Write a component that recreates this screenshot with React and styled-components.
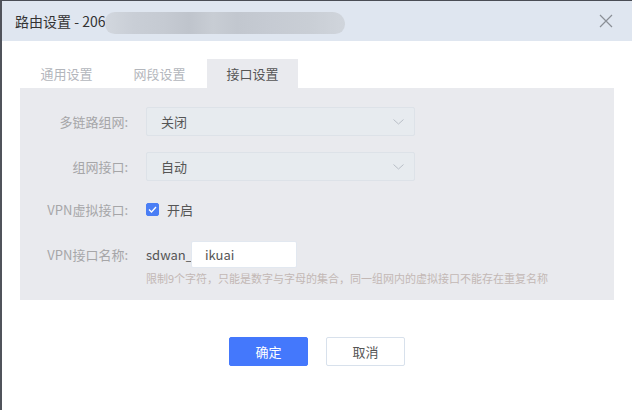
import { useState } from "react"
import styled, { createGlobalStyle } from "styled-components"

const GlobalStyle = createGlobalStyle`
  html, body {
    margin: 0;
    padding: 0;
    background: #ffffff;
  }
  body {
    font-family: "Noto Sans CJK SC", "Noto Sans", sans-serif;
    font-size: 13px;
    color: #555;
  }
`

const tabs = ["通用设置", "网段设置", "接口设置"]

const ChevronDown = () => (
  <svg width="11" height="6" viewBox="0 0 11 6">
    <path d="M0.5 0.5 L5.5 5 L10.5 0.5" fill="none" stroke="#b9bec6" strokeWidth="1" />
  </svg>
)

const CloseIcon = () => (
  <svg width="14" height="14" viewBox="0 0 14 14">
    <path d="M1 1 L13 13 M13 1 L1 13" stroke="#8a8f96" strokeWidth="1.2" />
  </svg>
)

const CheckMark = () => (
  <svg width="9" height="7" viewBox="0 0 9 7">
    <path d="M1 3.5 L3.5 6 L8 1" fill="none" stroke="#fff" strokeWidth="1.3" />
  </svg>
)

export default function App() {
  const [active, setActive] = useState(2)
  const [checked, setChecked] = useState(true)
  const [name, setName] = useState("ikuai")

  return (
    <>
      <GlobalStyle />
      <Modal>
        <Header>
          <Title>
            路由设置 - 206
            <Redacted />
          </Title>
          <CloseButton>
            <CloseIcon />
          </CloseButton>
        </Header>
        <Body>
          <TabBar>
            {tabs.map((t, i) => (
              <Tab key={t} $active={i === active} onClick={() => setActive(i)}>
                {t}
              </Tab>
            ))}
          </TabBar>
          <Panel>
            <Row>
              <Label>多链路组网:</Label>
              <Select>
                关闭
                <ChevronDown />
              </Select>
            </Row>
            <Row>
              <Label>组网接口:</Label>
              <Select>
                自动
                <ChevronDown />
              </Select>
            </Row>
            <Row $height={24}>
              <Label>VPN虚拟接口:</Label>
              <CheckLabel onClick={() => setChecked(!checked)}>
                <CheckBox $checked={checked}>{checked && <CheckMark />}</CheckBox>
                开启
              </CheckLabel>
            </Row>
            <Row $height={27} $top={20}>
              <Label>VPN接口名称:</Label>
              <NameField>
                <Prefix>sdwan_</Prefix>
                <NameInput value={name} onChange={(e) => setName(e.target.value)} />
              </NameField>
            </Row>
            <Hint>限制9个字符，只能是数字与字母的集合，同一组网内的虚拟接口不能存在重复名称</Hint>
          </Panel>
          <Footer>
            <Button $primary>确定</Button>
            <Button>取消</Button>
          </Footer>
        </Body>
      </Modal>
    </>
  )
}

const Modal = styled.div`
  box-sizing: border-box;
  height: 410px;
  border-top: 1px solid #4a4d55;
  border-left: 2px solid #50535b;
  background: #fff;
  display: flex;
  flex-direction: column;
`

const Header = styled.div`
  height: 40px;
  background: #dfe6f0;
  display: flex;
  align-items: center;
  justify-content: space-between;
  padding-left: 13px;
  padding-right: 19px;
`

const Title = styled.div`
  display: flex;
  align-items: center;
  font-size: 14px;
  color: #333;
  line-height: 20px;
`

const Redacted = styled.span`
  display: inline-block;
  width: 240px;
  height: 22px;
  margin-top: 4px;
  border-radius: 11px 14px 11px 11px;
  background: linear-gradient(
    90deg,
    #d2d7de 0%,
    #c9ced6 12%,
    #c5cad2 25%,
    #bfc4cc 35%,
    #c8cdd4 45%,
    #c2c7cf 55%,
    #c6cbd3 70%,
    #c9ced5 85%,
    #d0d5dc 100%
  );
  filter: blur(0.6px);
`

const CloseButton = styled.div`
  display: flex;
  align-items: center;
  cursor: pointer;
`

const Body = styled.div`
  padding: 18px 18px 0 18px;
  display: flex;
  flex-direction: column;
`

const TabBar = styled.div`
  display: flex;
  gap: 2px;
  padding-left: 1px;
`

const Tab = styled.div`
  width: 91px;
  height: 29px;
  display: flex;
  align-items: center;
  justify-content: center;
  font-size: 13px;
  color: ${(p) => (p.$active ? "#555" : "#b3b6bc")};
  background: ${(p) => (p.$active ? "#e9eaee" : "transparent")};
  cursor: pointer;
`

const Panel = styled.div`
  background: #e9eaee;
  padding: 19px 0 15px 0;
  display: flex;
  flex-direction: column;
`

const Row = styled.div`
  display: flex;
  align-items: center;
  height: ${(p) => p.$height || 29}px;
  margin-top: ${(p) => (p.$top === undefined ? 16 : p.$top)}px;
  &:first-child {
    margin-top: 0;
  }
`

const Label = styled.div`
  width: 108px;
  margin-right: 18px;
  text-align: right;
  color: #a6a6a8;
  font-size: 13px;
`

const Select = styled.div`
  box-sizing: border-box;
  width: 269px;
  height: 29px;
  border: 1px solid #dde2e8;
  border-radius: 2px;
  background: #e7ebef;
  display: flex;
  align-items: center;
  justify-content: space-between;
  padding: 0 10px 0 14px;
  color: #555;
  font-size: 13px;
`

const CheckLabel = styled.label`
  display: flex;
  align-items: center;
  gap: 8px;
  color: #555;
  cursor: pointer;
`

const CheckBox = styled.span`
  box-sizing: border-box;
  width: 13px;
  height: 13px;
  border-radius: 2px;
  display: flex;
  align-items: center;
  justify-content: center;
  background: ${(p) => (p.$checked ? "#4a7ef5" : "#fff")};
  border: 1px solid ${(p) => (p.$checked ? "#4a7ef5" : "#ccd")};
`

const NameField = styled.div`
  display: flex;
  align-items: center;
`

const Prefix = styled.span`
  color: #555;
  font-size: 13px;
  width: 45px;
`

const NameInput = styled.input`
  box-sizing: border-box;
  width: 106px;
  height: 27px;
  border: 1px solid #e2e8f0;
  border-radius: 2px;
  background: #fff;
  padding: 0 0 0 13px;
  font-family: inherit;
  font-size: 13px;
  color: #555;
  outline: none;
`

const Hint = styled.div`
  margin: 3px 0 0 126px;
  font-size: 11px;
  line-height: 14px;
  color: #c3b8b5;
`

const Footer = styled.div`
  display: flex;
  justify-content: center;
  gap: 18px;
  margin-top: 37px;
`

const Button = styled.button`
  box-sizing: border-box;
  width: 79px;
  height: 29px;
  border-radius: 2px;
  font-family: inherit;
  font-size: 13px;
  cursor: pointer;
  background: ${(p) => (p.$primary ? "#4478fc" : "#fff")};
  color: ${(p) => (p.$primary ? "#fff" : "#555")};
  border: 1px solid ${(p) => (p.$primary ? "#4478fc" : "#d8e1ec")};
`
